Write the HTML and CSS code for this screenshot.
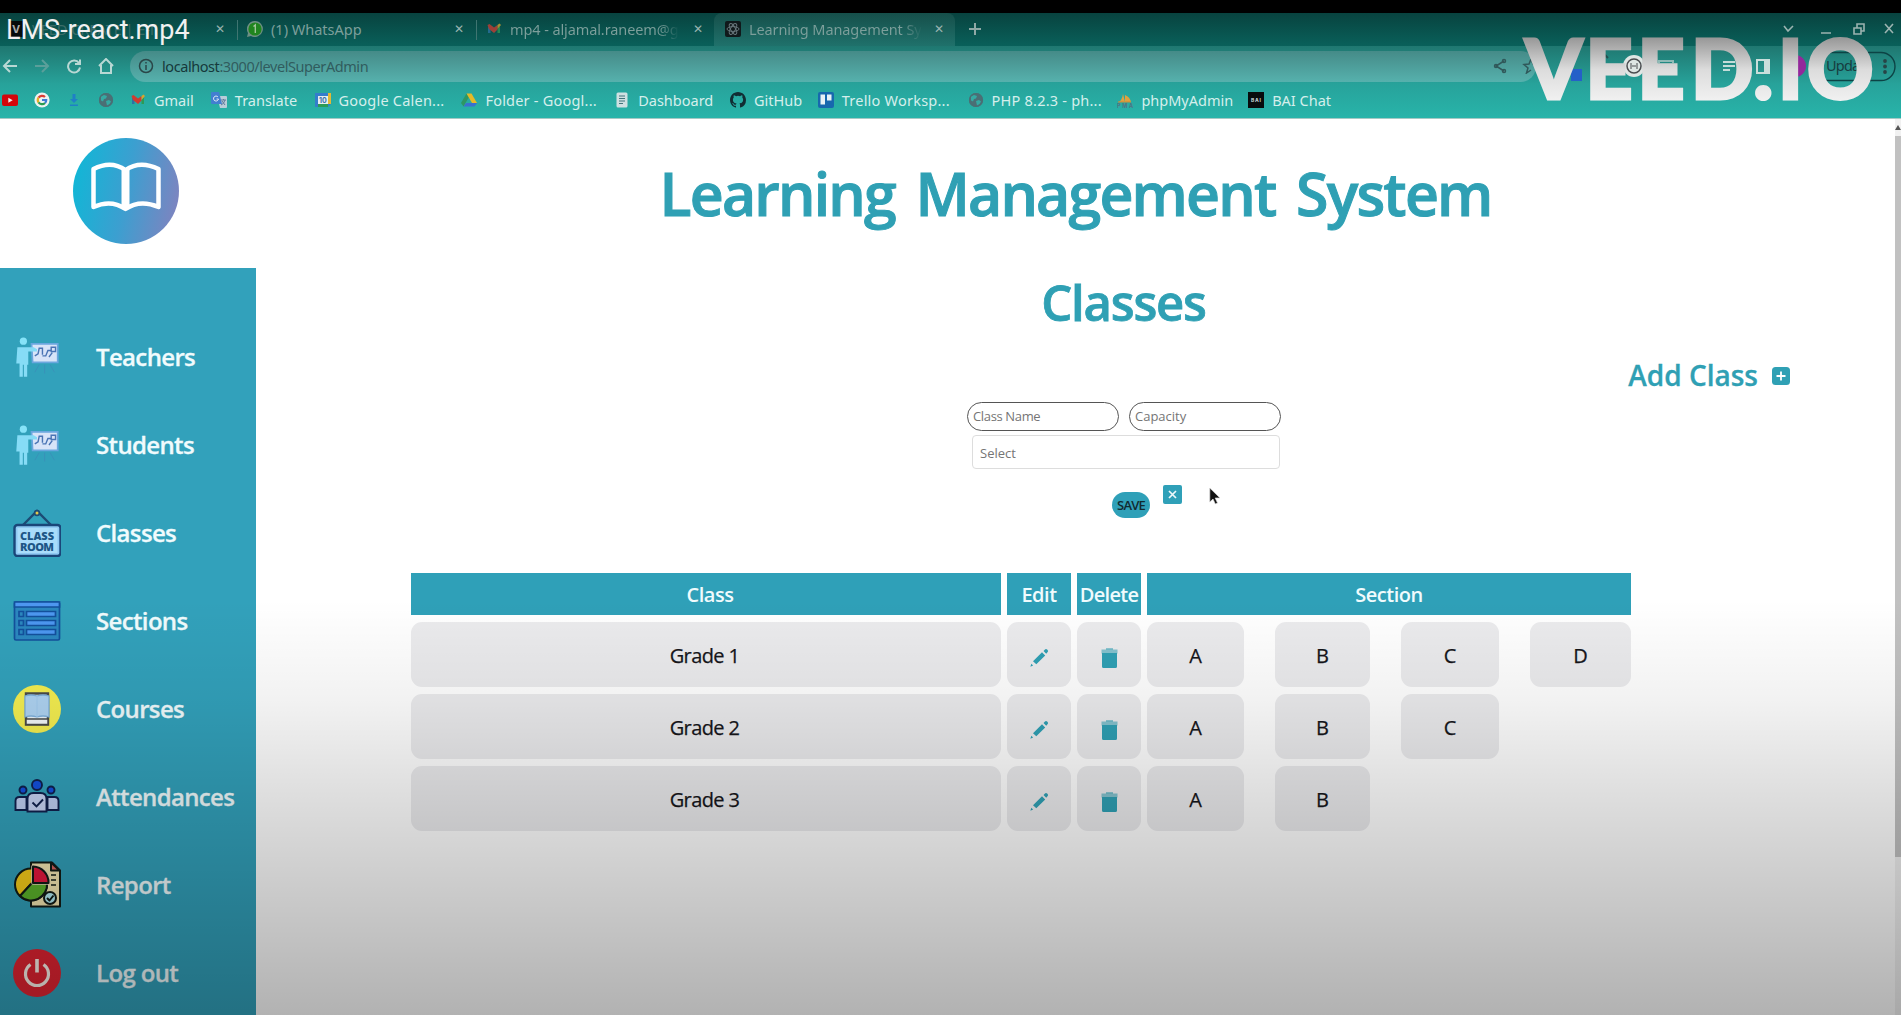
FILE: index.html
```html
<!DOCTYPE html>
<html lang="en">
<head>
<meta charset="utf-8">
<title>Learning Management System</title>
<link rel="stylesheet" href="styles.css">
</head>
<body>
<svg class="defs" aria-hidden="true">
  <symbol id="globe" viewBox="0 0 16 16"><circle cx="8" cy="8" r="7" fill="#4a6f75"/><path d="M3 4.500l3-1.500 3 1-1 2.500-2 .5-1 2.500-2-1zM8 9l3-1 2 1.500-1.500 2.500-2.500 1.500z" fill="#35aaa3"/><circle cx="8" cy="8" r="6.500" fill="none" stroke="#4a6f75" stroke-width="1.200"/></symbol>
  <symbol id="gmail" viewBox="0 0 16 16"><path d="M2 5v7h2.500V8z" fill="#2c72a5"/><path d="M14 5v7h-2.500V8z" fill="#2c9b55"/><path d="M1.500 4 3.500 3 8 6.500 11.500 4v4.500L8 12 3 8z" fill="#cf3b30"/><path d="M11.500 4l2-1.500L15 4l-3.500 4z" fill="#d9a42c"/></symbol>
  <symbol id="teach" viewBox="0 0 44 42"><path d="M17 9h24v17H18z" fill="#d8e4f8" stroke="#6aa7de" stroke-width="1.600"/><path d="M20 20l3-2 1-5h3v6M27 20h3l2-5h3M33 21l3-4M35 12h4v4h-4z" fill="none" stroke="#4a74b4" stroke-width="1.300"/><path d="M24 28l-4 7M29 28v8M34 28l4 7" stroke="#3a90b8" stroke-width=".8"/><circle cx="9.500" cy="6.500" r="3.300" fill="#86e3f8"/><path d="M4 12h15l3 2v2h-8v12h-1v11h-3V28H9v11H6V27H3z" fill="#86dcf6"/></symbol>
  <symbol id="pencil" viewBox="0 0 20 20"><path d="M14.500 3l1.500-1.600q1.100-1 2.400.3 1.300 1.300.3 2.400L17.200 5.700zM13 4.300l3.200 3.100L7.300 16.300 4 13.200zM2.300 15.800l1.800 1.800-2.700 1.200z"/></symbol>
  <symbol id="trash" viewBox="0 0 17 20"><path d="M.5 1.500h16v4H.5z" opacity=".55"/><path d="M5 .4h7v1.200H5zM1 5h15v13.500q0 1.500-1.500 1.500h-12Q1 20 1 18.500z"/></symbol>
</svg>

<header class="browser">
  <div class="tabs">
    <div class="tab first"><i class="veed-icon">V</i><span class="faded">VEED CREATE | E-li</span><b>✕</b></div>
    <div class="tab">
      <svg class="ico" viewBox="0 0 16 16"><path d="M8 0a8 8 0 1 1-4 15L0 16l1-4A8 8 0 0 1 8 0z" fill="#6d8f83"/><circle cx="8" cy="8" r="6.600" fill="#20851f"/><path d="M6.500 5.500L8.300 4v8" fill="none" stroke="#a8c8a0" stroke-width="1.300"/></svg>
      <span>(1) WhatsApp</span><b>✕</b></div>
    <div class="tab"><svg class="ico dim"><use href="#gmail"/></svg><span class="fade">mp4 - aljamal.raneem@g</span><b>✕</b></div>
    <div class="tab active">
      <svg class="ico" viewBox="0 0 16 16"><rect width="16" height="16" rx="2" fill="#10191b"/><g fill="none" stroke="#66757a"><ellipse cx="8" cy="8" rx="6" ry="2.400"/><ellipse cx="8" cy="8" rx="6" ry="2.400" transform="rotate(60 8 8)"/><ellipse cx="8" cy="8" rx="6" ry="2.400" transform="rotate(120 8 8)"/></g></svg>
      <span class="fade">Learning Management Sy</span><b>✕</b></div>
    <svg class="plus" viewBox="0 0 12 12"><path d="M6 0v12M0 6h12" stroke="#8fa9a6" stroke-width="2"/></svg>
    <svg class="winctl" viewBox="0 0 112 16" fill="none" stroke="#9bb3b0" stroke-width="1.600"><path d="M2 5l4 5 5-5M39 12h10M72 7h7v6h-7zM75 7V3h7v7h-3M103 3l8 9M111 3l-8 9"/></svg>
  </div>

  <div class="toolbar">
    <svg class="nav-ico" viewBox="0 0 16 16"><path d="M15 8H2M8 2L2 8l6 6"/></svg>
    <svg class="nav-ico off" viewBox="0 0 16 16"><path d="M1 8h13M8 2l6 6-6 6"/></svg>
    <svg class="nav-ico" viewBox="0 0 16 16"><path d="M13 5A6 6 0 1 0 14 9.500M14 1.500V6H9"/></svg>
    <svg class="nav-ico" viewBox="0 0 16 16"><path d="M1 8l7-7 7 7M3 7v8h10V7"/></svg>
    <div class="omnibox">
      <svg class="info" viewBox="0 0 16 16" fill="none" stroke="#2a4648" stroke-width="1.500"><circle cx="8" cy="8" r="6.500"/><path d="M8 7v5M8 4v1.600"/></svg>
      <span class="url"><em>localhost</em>:3000/levelSuperAdmin</span>
      <svg class="share" viewBox="0 0 44 16" fill="none" stroke="#30585a" stroke-width="1.500"><path d="M11 3L3 8l8 5"/><circle cx="11" cy="3" r="1.500"/><circle cx="3" cy="8" r="1.500"/><circle cx="11" cy="13" r="1.500"/><path d="M38 1l2 5h4M38 1l-2 5-5 .5 4 3.500-1.500 5L38 12"/></svg>
    </div>
    <svg class="exts" viewBox="0 0 352 32">
      <path d="M22 12l6-7 1 5-5 3z" fill="#102224"/><rect x="26" y="18" width="11" height="12" fill="#2560c8"/>
      <path d="M56 10v-4l4-2 3 3" fill="none" stroke="#24504f" stroke-width="2"/>
      <circle cx="89" cy="15" r="11" fill="#dfe6e4"/><circle cx="89" cy="15" r="7" fill="none" stroke="#4b4d50" stroke-width="1.500"/><path d="M86 12v6M92 12v6M87 15h4" stroke="#4b4d50"/>
      <path d="M114 12V10h14v2" fill="none" stroke="#8fbab6" stroke-width="2"/>
      <path d="M178 11h12M178 15h12M178 19h7" stroke="#c4dcd9" stroke-width="1.800"/>
      <rect x="212" y="9" width="12" height="13" fill="none" stroke="#c9dedb" stroke-width="2"/><path d="M219 8h6v15h-6z" fill="#c9dedb"/>
      <circle cx="250" cy="15" r="11" fill="#93289b"/>
      <rect x="269" y="1.500" width="81" height="28" rx="14" fill="none" stroke="#0c4345" stroke-width="1.400"/>
      <g fill="#274446"><circle cx="340" cy="10" r="1.900"/><circle cx="340" cy="15.500" r="1.900"/><circle cx="340" cy="21" r="1.900"/></g>
      <text x="281" y="20" class="update">Upda</text>
    </svg>
  </div>

  <div class="bookmarks">
    <svg class="ico" viewBox="0 0 16 16"><rect y="2.500" width="16" height="11.500" rx="2" fill="#d4050b"/><path d="M6.300 5.700v5l4.400-2.500z" fill="#eee"/></svg>
    <svg class="ico" viewBox="0 0 16 16"><circle cx="8" cy="8" r="7.600" fill="#edf3f1"/><g fill="none" stroke-width="2.200"><path d="M11 5A4.300 4.300 0 0 0 4.500 5.700" stroke="#d83d35"/><path d="M4.500 5.700a4.300 4.300 0 0 0 0 4.700" stroke="#e6ae26"/><path d="M4.500 10.400a4.300 4.300 0 0 0 6.500.6" stroke="#2b9b51"/><path d="M11 11a4.300 4.300 0 0 0 1.200-3H8" stroke="#3c7ad6"/></g></svg>
    <svg class="ico" viewBox="0 0 16 16"><path d="M6.500 2h3v5H12l-4 4-4-4h2.500zM4 12.500h8V14H4z" fill="#1f80c6"/></svg>
    <svg class="ico"><use href="#globe"/></svg>
    <a><svg class="ico"><use href="#gmail"/></svg><span style="width:40px">Gmail</span></a>
    <a><svg class="ico" viewBox="0 0 16 16"><path d="M6 4h9q1 0 1 1v10q0 1-1 1H9z" fill="#b9cdd9"/><path d="M1 0h7l3 12H1q-1 0-1-1V1q0-1 1-1z" fill="#427fd0"/><path d="M7 5a2.500 2.500 0 1 0 .5 2H5.500" fill="none" stroke="#dfe9f5"/><path d="M10 8h5M12.500 7v1M14 8q-1 4-4 5M11 9l3 4" stroke="#627a9a" fill="none"/></svg><span style="width:63px">Translate</span></a>
    <a><svg class="ico" viewBox="0 0 16 16"><path d="M0 1h16v11l-3 3H0z" fill="#347dcc"/><path d="M13 1h3v11h-3z" fill="#e3b935"/><path d="M3 12h10v3H3z" fill="#2d9b55"/><path d="M3 4h10v8H3z" fill="#e6eef0"/><text x="4" y="11" font-size="7" font-weight="700" fill="#3870ac">10</text></svg><span class="wide" style="width:106px">Google Calen...</span></a>
    <a><svg class="ico" viewBox="0 0 16 16"><path d="M5.500 1.500L0 11l2.500 3.500L8 5z" fill="#2d9763"/><path d="M5.500 1.500h5L16 11h-5z" fill="#e6b927"/><path d="M5 11h11l-2.500 3.500h-11z" fill="#3a70cf"/></svg><span class="wide" style="width:112px">Folder - Googl...</span></a>
    <a><svg class="ico" viewBox="0 0 16 16"><rect x="2.500" y=".5" width="11" height="15" rx="1.500" fill="#cfe0e2"/><path d="M5 4h6M5 6.500h6M5 9h6M5 11.500h4" stroke="#41747a"/></svg><span style="width:75px">Dashboard</span></a>
    <a><svg class="ico" viewBox="0 0 16 16"><path fill="#112d33" d="M8 0C3.580 0 0 3.580 0 8c0 3.540 2.290 6.530 5.470 7.590.4.070.55-.17.55-.38v-1.490c-2.230.48-2.690-.94-2.690-.94-.36-.92-.89-1.170-.89-1.170-.73-.5.050-.49.050-.49.810.060 1.230.83 1.230.83.72 1.230 1.870.87 2.330.66.070-.52.28-.87.51-1.070-1.780-.2-3.640-.89-3.640-3.950 0-.87.31-1.590.82-2.150-.08-.2-.36-1.020.08-2.120 0 0 .67-.21 2.200.82a7.600 7.600 0 0 1 4 0c1.530-1.040 2.200-.82 2.200-.82.44 1.100.16 1.920.08 2.120.51.560.82 1.270.82 2.150 0 3.070-1.870 3.750-3.650 3.950.29.25.54.73.54 1.480v2.200c0 .21.150.46.550.38A8 8 0 0 0 16 8c0-4.420-3.580-8-8-8z"/></svg><span style="width:47px">GitHub</span></a>
    <a><svg class="ico" viewBox="0 0 16 16"><rect width="16" height="16" rx="2" fill="#1768ae"/><path d="M2.500 2.500h4.500v10H2.500zM9 2.500h4.500v6H9z" fill="#e8f2f6"/></svg><span class="wide" style="width:109px">Trello Worksp...</span></a>
    <a><svg class="ico"><use href="#globe"/></svg><span class="wide" style="width:109px">PHP 8.2.3 - ph...</span></a>
    <a><svg class="ico" viewBox="0 0 16 16"><path d="M1 10q4-1 5-8l2 8zM8 10V3q5 2 6 7z" fill="#e0a13e"/><path d="M1 10h13" stroke="#c98938"/><text x="0" y="15.500" font-size="5.500" font-weight="700" fill="#4e7385" textLength="16">PMA</text></svg><span style="width:90px">phpMyAdmin</span></a>
    <a><svg class="ico" viewBox="0 0 16 16"><rect width="16" height="16" fill="#080c0d"/><text x="3" y="9.500" font-size="5" font-weight="700" fill="#cdd" textLength="10">BAI</text></svg><span style="width:58px">BAI Chat</span></a>
  </div>
  <div class="video-title">LMS-react.mp4</div>
  <svg class="watermark" viewBox="1500 13 401 106">
    <defs><linearGradient id="wm" gradientUnits="userSpaceOnUse" x1="0" y1="38" x2="0" y2="101"><stop offset="0" stop-color="#989898"/><stop offset=".5" stop-color="#dcdcdc"/><stop offset="1" stop-color="#f1f1f1"/></linearGradient></defs>
    <text x="1525 1585.500 1637.500 1691 1753.500 1778 1807" y="99.300" fill="url(#wm)" stroke="url(#wm)">VEED.IO</text>
  </svg>
</header>

<div class="app">
  <aside>
    <div class="logo">
      <svg viewBox="0 0 106 106"><defs><linearGradient id="lg" x1="0" y1=".4" x2="1" y2=".6"><stop offset="0" stop-color="#12b6d6"/><stop offset=".5" stop-color="#3c9fd0"/><stop offset="1" stop-color="#7d84c0"/></linearGradient></defs><circle cx="53" cy="53" r="53" fill="url(#lg)"/><path d="M52.500 32Q38 22 20.500 31v38Q38 61 52.500 71Q67 61 85.500 69V31Q67 22 52.500 32z" fill="none" stroke="#fff" stroke-width="4.500" stroke-linejoin="round"/><path d="M52.500 31v40" stroke="#fff" stroke-width="8"/></svg>
    </div>
    <nav>
      <a><svg viewBox="0 0 44 42"><use href="#teach"/></svg><span>Teachers</span></a>
      <a><svg viewBox="0 0 44 42"><use href="#teach"/></svg><span>Students</span></a>
      <a><svg viewBox="0 0 48 48"><path d="M10 16L24 2l14 14" fill="none" stroke="#1c4b74" stroke-width="2.400"/><circle cx="24" cy="4" r="3.200" fill="#1c4b74"/><circle cx="24" cy="4" r="1.500" fill="#e6c84a"/><rect x="1.500" y="16" width="46" height="31" rx="3" fill="#8fc9f3" stroke="#1a4679" stroke-width="2.400"/><rect x="4.500" y="19" width="40" height="25" fill="#a9dcfa"/><text x="24" y="30.500" class="room" textLength="34">CLASS</text><text x="24" y="41.500" class="room" textLength="34">ROOM</text></svg><span>Classes</span></a>
      <a><svg viewBox="0 0 48 48"><g fill="none" stroke="#13509c" stroke-width="1.700"><rect x="1.500" y="5" width="45" height="38" rx="1.500" fill="#2b87bf"/><path d="M1.500 5h45v5h-45zM13.500 14.500h29v5h-29zM13.500 23.500h29v5h-29zM13.500 32.500h29v5h-29z" fill="#4d97f0"/><path d="M6 14.500h4.500v5H6zM6 23.500h4.500v5H6zM6 32.500h4.500v5H6z"/></g></svg><span>Sections</span></a>
      <a><svg viewBox="0 0 48 48"><circle cx="24" cy="24" r="24" fill="#f4ee50"/><path d="M13 8.500h22v31H13z" fill="#e9f4fb" stroke="#4a4b4a" stroke-width="2.400"/><path d="M12 11q6-2 12 0 6-2 12 0v21q-6-2-12 0-6-2-12 0z" fill="#aed3f2" stroke="#7fb1dd" stroke-width="1.300"/><path d="M24 11v21" stroke="#a0caee"/><path d="M13 34h22v5.500H13z" fill="#f4f8fa" stroke="#4a4b4a" stroke-width="1.500"/></svg><span>Courses</span></a>
      <a><svg viewBox="0 0 48 48" stroke="#10204e" stroke-width="1.900"><circle cx="24" cy="12" r="5" fill="#1350e0"/><circle cx="10" cy="17" r="3.500" fill="#1350e0"/><circle cx="38" cy="17" r="3.500" fill="#1350e0"/><path d="M2.500 37V28q0-4 4-4h7v13zM45.500 37V28q0-4-4-4h-7v13z" fill="#c0d0f4"/><path d="M14.500 38.500V26q0-6 6-6h7q6 0 6 6v12.500z" fill="#c8d4f6"/><path d="M19.500 29.500l4 4 6.500-7" fill="none"/></svg><span>Attendances</span></a>
      <a><svg viewBox="0 0 48 48" stroke="#121c16" stroke-width="2" stroke-linejoin="round"><path d="M18 1.500h21l8 8v36H18z" fill="#f8eab4"/><path d="M38 1.500v8h8.500z" fill="#d9625e"/><path d="M38 14h5M38 19h5M38 24h5" stroke-width="1.700"/><circle cx="18" cy="23.500" r="16" fill="#fad01a"/><path d="M18 23L7 35" /><path d="M19 22h15a16 16 0 0 1-27 13z" fill="#5cb52b"/><path d="M20 5.500a16 16 0 0 1 15.500 16.500H20z" fill="#e8173e" stroke="#f0dcc0" stroke-width="3.500"/><path d="M20 5.500a16 16 0 0 1 15.500 16.500H20z" fill="#e8173e"/><circle cx="37" cy="37" r="6" fill="#b4eef6"/><path d="M34 37l2.500 2.500 4-5" fill="none"/></svg><span>Report</span></a>
      <a><svg viewBox="0 0 48 48"><circle cx="24" cy="24" r="24" fill="#e42432"/><g fill="none" stroke="#fff6ee" stroke-width="3.200"><path d="M17.500 15.500a11.500 11.500 0 1 0 13 0"/><path d="M24 10v13.500" stroke-width="3.600"/></g></svg><span>Log out</span></a>
    </nav>
  </aside>

  <main>
    <h1>Learning Management System</h1>
    <h2>Classes</h2>
    <div class="add">Add Class <svg viewBox="0 0 18 18"><rect width="18" height="18" rx="3.500" fill="#2fa0b4"/><path d="M9 4.500v9M4.500 9h9" stroke="#fff" stroke-width="1.800"/></svg></div>
    <form>
      <div class="inputs"><div class="field name">Class Name</div><div class="field cap">Capacity</div></div>
      <div class="select">Select</div>
      <div class="actions"><span class="save">SAVE</span>
        <svg viewBox="0 0 19 19"><rect width="19" height="19" rx="2" fill="#2fa0b8"/><path d="M6 6l7 7M13 6l-7 7" stroke="#eef8fa" stroke-width="1.700"/></svg></div>
    </form>
    <div class="table">
      <div class="th first-col">Class</div><div class="th">Edit</div><div class="th del">Delete</div><div class="th">Section</div>
      <div class="td grade">Grade 1</div><div class="td"><svg class="pen"><use href="#pencil"/></svg></div><div class="td"><svg class="bin"><use href="#trash"/></svg></div>
      <div class="secs"><div class="td">A</div><div class="td">B</div><div class="td">C</div><div class="td">D</div></div>
      <div class="td grade">Grade 2</div><div class="td"><svg class="pen"><use href="#pencil"/></svg></div><div class="td"><svg class="bin"><use href="#trash"/></svg></div>
      <div class="secs"><div class="td">A</div><div class="td">B</div><div class="td">C</div></div>
      <div class="td grade">Grade 3</div><div class="td"><svg class="pen"><use href="#pencil"/></svg></div><div class="td"><svg class="bin"><use href="#trash"/></svg></div>
      <div class="secs"><div class="td">A</div><div class="td">B</div></div>
    </div>
  </main>
  <div class="scroll"><i></i><span></span></div>
  <svg class="cursor" viewBox="0 0 12 18"><path d="M.8 0v14l3.200-3 2.300 5 2.200-1-2.300-5H11z" fill="#111" stroke="#ddd" stroke-width=".7"/></svg>
</div>
</body>
</html>
```
FILE: styles.css
```css
* { box-sizing: border-box; }
body {
  margin: 0;
  width: 1901px;
  height: 1015px;
  overflow: hidden;
  background: #fff;
  font-family: "Open Sans", "Noto Sans", sans-serif;
}
.defs { position: absolute; width: 0; height: 0; }
svg { display: block; flex: none; }

/* browser chrome */
.browser {
  position: relative;
  height: 119px;
  padding-top: 13px;
  background: #000;
  border-bottom: 1px solid #a5c9c5;
  font: 14.5px "Noto Sans", sans-serif;
}
.tabs {
  display: flex;
  height: 33px;
  background: linear-gradient(#08433f, #09605a);
  color: #7d9f9b;
}
.tab {
  display: flex;
  align-items: center;
  gap: 8px;
  width: 239px;
  padding: 0 10px 2px 10px;
  white-space: nowrap;
  border-left: 1px solid transparent;
}
.tab:nth-child(2), .tab:nth-child(3) {
  background: linear-gradient(#3f7571, #3f7571) left 0 center / 1px 20px no-repeat;
}
.tab.first { width: 236px; padding-left: 7px; }
.tab.active { width: 241px; padding-left: 10px; background: linear-gradient(#164f4a, #1f716b); border-radius: 8px 8px 0 0; }
.tab b { margin-left: auto; width: 11px; font: 700 12px "DejaVu Sans", sans-serif; color: #9bb3b0; }
.tab .fade { background: linear-gradient(90deg, #7d9f9b 88%, transparent); -webkit-background-clip: text; background-clip: text; color: transparent; letter-spacing: -.1px; }
.tab .faded { color: #3b6c68; }
.veed-icon { width: 16px; height: 16px; background: #050b0b; color: #aaa; font: 700 11px/16px Inter, sans-serif; text-align: center; }
.ico { width: 16px; height: 16px; }
.dim { opacity: .75; }
.plus { width: 12px; height: 12px; margin: 10px 0 0 14px; }
.winctl { width: 112px; height: 16px; margin: 8px 7px 0 auto; }

.toolbar {
  display: flex;
  align-items: flex-start;
  gap: 16px;
  height: 37px;
  padding: 5px 4px 0 2px;
  background: linear-gradient(#1f7770, #27a199);
}
.nav-ico { width: 16px; height: 16px; margin-top: 7px; fill: none; stroke: #b9d8d4; stroke-width: 2; }
.nav-ico.off { stroke: #5b9f9a; }
.omnibox {
  display: flex;
  align-items: center;
  width: 1412px;
  height: 31px;
  padding: 0 0 1px 8px;
  border-radius: 16px;
  background: linear-gradient(#458b88, #56b1ad);
}
.info { width: 16px; height: 16px; }
.url { margin-left: 8px; color: #315c5e; letter-spacing: -.43px; }
.url em { font-style: normal; color: #16393b; }
.share { width: 44px; height: 16px; margin-left: auto; margin-right: -1px; }
.exts { width: 352px; height: 32px; margin-left: -7px; }
.update { font: 14.5px "Noto Sans", sans-serif; fill: #173d40; letter-spacing: -.8px; }

.bookmarks {
  display: flex;
  align-items: center;
  gap: 16.8px;
  height: 35px;
  padding: 0 0 1px 2px;
  background: linear-gradient(#27a29a, #28b4aa);
  color: #d5efec;
}
.bookmarks > svg { margin-right: -.8px; }
.bookmarks a { display: flex; align-items: center; gap: 8px; white-space: nowrap; }
.bookmarks a span { margin-top: -1px; }
.bookmarks .wide { letter-spacing: .22px; }
.bookmarks text { font-family: Inter, sans-serif; }

.video-title {
  position: absolute;
  left: 6px;
  top: 14px;
  font: 27px/32px Roboto, sans-serif;
  letter-spacing: 0;
  color: #f1f1f1;
}
.watermark { position: absolute; left: 1500px; top: 13px; width: 401px; height: 106px; }
.watermark text { font: 900 82px Lato, sans-serif; stroke-width: 3px; }

/* application */
.app { position: relative; display: flex; height: 896px; }
.app::after {
  content: "";
  position: absolute;
  inset: 0;
  pointer-events: none;
  background: linear-gradient(rgba(0,0,0,0) 480px, rgba(0,0,0,.05) 580px, rgba(0,0,0,.14) 690px, rgba(0,0,0,.22) 790px, rgba(0,0,0,.3) 896px);
}
aside { width: 256px; display: flex; flex-direction: column; }
.logo { height: 149px; padding: 19px 0 0 73px; }
.logo svg { width: 106px; height: 106px; }
nav { height: 747px; padding-top: 45px; background: #32a1bb; overflow: hidden; }
nav a {
  display: flex;
  align-items: center;
  gap: 35px;
  height: 88px;
  padding-left: 13px;
  font-size: 24px;
  font-weight: 600;
  letter-spacing: -.65px;
  color: #f0fbfd;
  -webkit-text-stroke: .3px #f0fbfd;
}
nav a span { margin-top: -2px; }
nav svg { width: 48px; height: 48px; }
.room { font: 800 11px "Open Sans", sans-serif; fill: #1d5686; text-anchor: middle; -webkit-text-stroke: 0; letter-spacing: 0; }

main { flex: 1; display: flex; flex-direction: column; color: #2fa0b4; }
h1 {
  margin: 0;
  height: 149px;
  font-size: 59px;
  font-weight: 600;
  line-height: 149px;
  letter-spacing: -1.8px;
  word-spacing: 7px;
  text-align: center;
  -webkit-text-stroke: 1px #2fa0b4;
}
h2 {
  margin: 0;
  height: 66px;
  padding-left: 96px;
  font-size: 49px;
  font-weight: 600;
  line-height: 68px;
  letter-spacing: -1.2px;
  text-align: center;
  -webkit-text-stroke: .8px #2fa0b4;
}
.add {
  display: flex;
  align-items: center;
  justify-content: flex-end;
  gap: 14px;
  height: 79px;
  padding: 2px 105px 0 0;
  font-size: 28px;
  font-weight: 600;
  -webkit-text-stroke: .3px #2fa0b4;
}
.add svg { width: 18px; height: 18px; margin-top: 3px; }
form { width: 314px; height: 160px; margin: -11px 0 0 711px; color: #757575; font-size: 13px; }
.inputs { display: flex; gap: 10px; }
.field { width: 152px; height: 29px; padding-left: 5px; border: 1.500px solid #555; border-radius: 15px; line-height: 27px; background: #fff; }
.field.name { letter-spacing: -.35px; }
.select { height: 34px; margin: 4px 1px 0 5px; padding-left: 7px; border: 1px solid #ddd; border-radius: 4px; line-height: 35px; }
.actions { display: flex; gap: 13px; padding: 16px 0 0 145px; }
.actions svg { width: 19px; height: 19px; }
.save { width: 38px; height: 26px; margin-top: 7px; border-radius: 13px; background: #2fa0b8; color: #112a30; line-height: 26px; text-align: center; letter-spacing: -.8px; font-weight: 600; }

.table {
  display: grid;
  grid-template-columns: 590px 64px 64px 484px;
  grid-template-rows: 42px 65px 65px 65px;
  gap: 7px 6px;
  margin: 11px 0 0 155px;
  color: #15151a;
  font-size: 20px;
}
.th {
  display: flex;
  align-items: center;
  justify-content: center;
  padding-top: 1px;
  background: #2fa0b8;
  color: #f0fbfd;
  font-weight: 600;
  letter-spacing: -.5px;
}
.first-col { padding-left: 8px; }
.th.del { letter-spacing: -.7px; }
.td {
  display: flex;
  align-items: center;
  justify-content: center;
  padding-top: 1px;
  border-radius: 11px;
  background: #ebebed;
  -webkit-text-stroke: .25px #15151a;
}
.td svg { -webkit-text-stroke: 0; fill: #2fa0b4; }
.grade { padding-right: 3px; letter-spacing: -.6px; }
.pen { width: 20px; height: 20px; margin-top: 5px; }
.bin { width: 17px; height: 20px; margin-top: 5px; }
.secs { display: grid; grid-template-columns: 97px 95px 98px 101px; gap: 31px; }

.scroll { width: 6px; padding-top: 5px; background: #f1f1f1; }
.scroll i { display: block; height: 6px; border: 3px solid transparent; border-top: 0; border-bottom: 5px solid #555; }
.scroll span { display: block; height: 721px; margin-top: 6px; background: #c1c1c1; }
.cursor { position: absolute; left: 1209px; top: 369px; width: 12px; height: 18px; }
```
